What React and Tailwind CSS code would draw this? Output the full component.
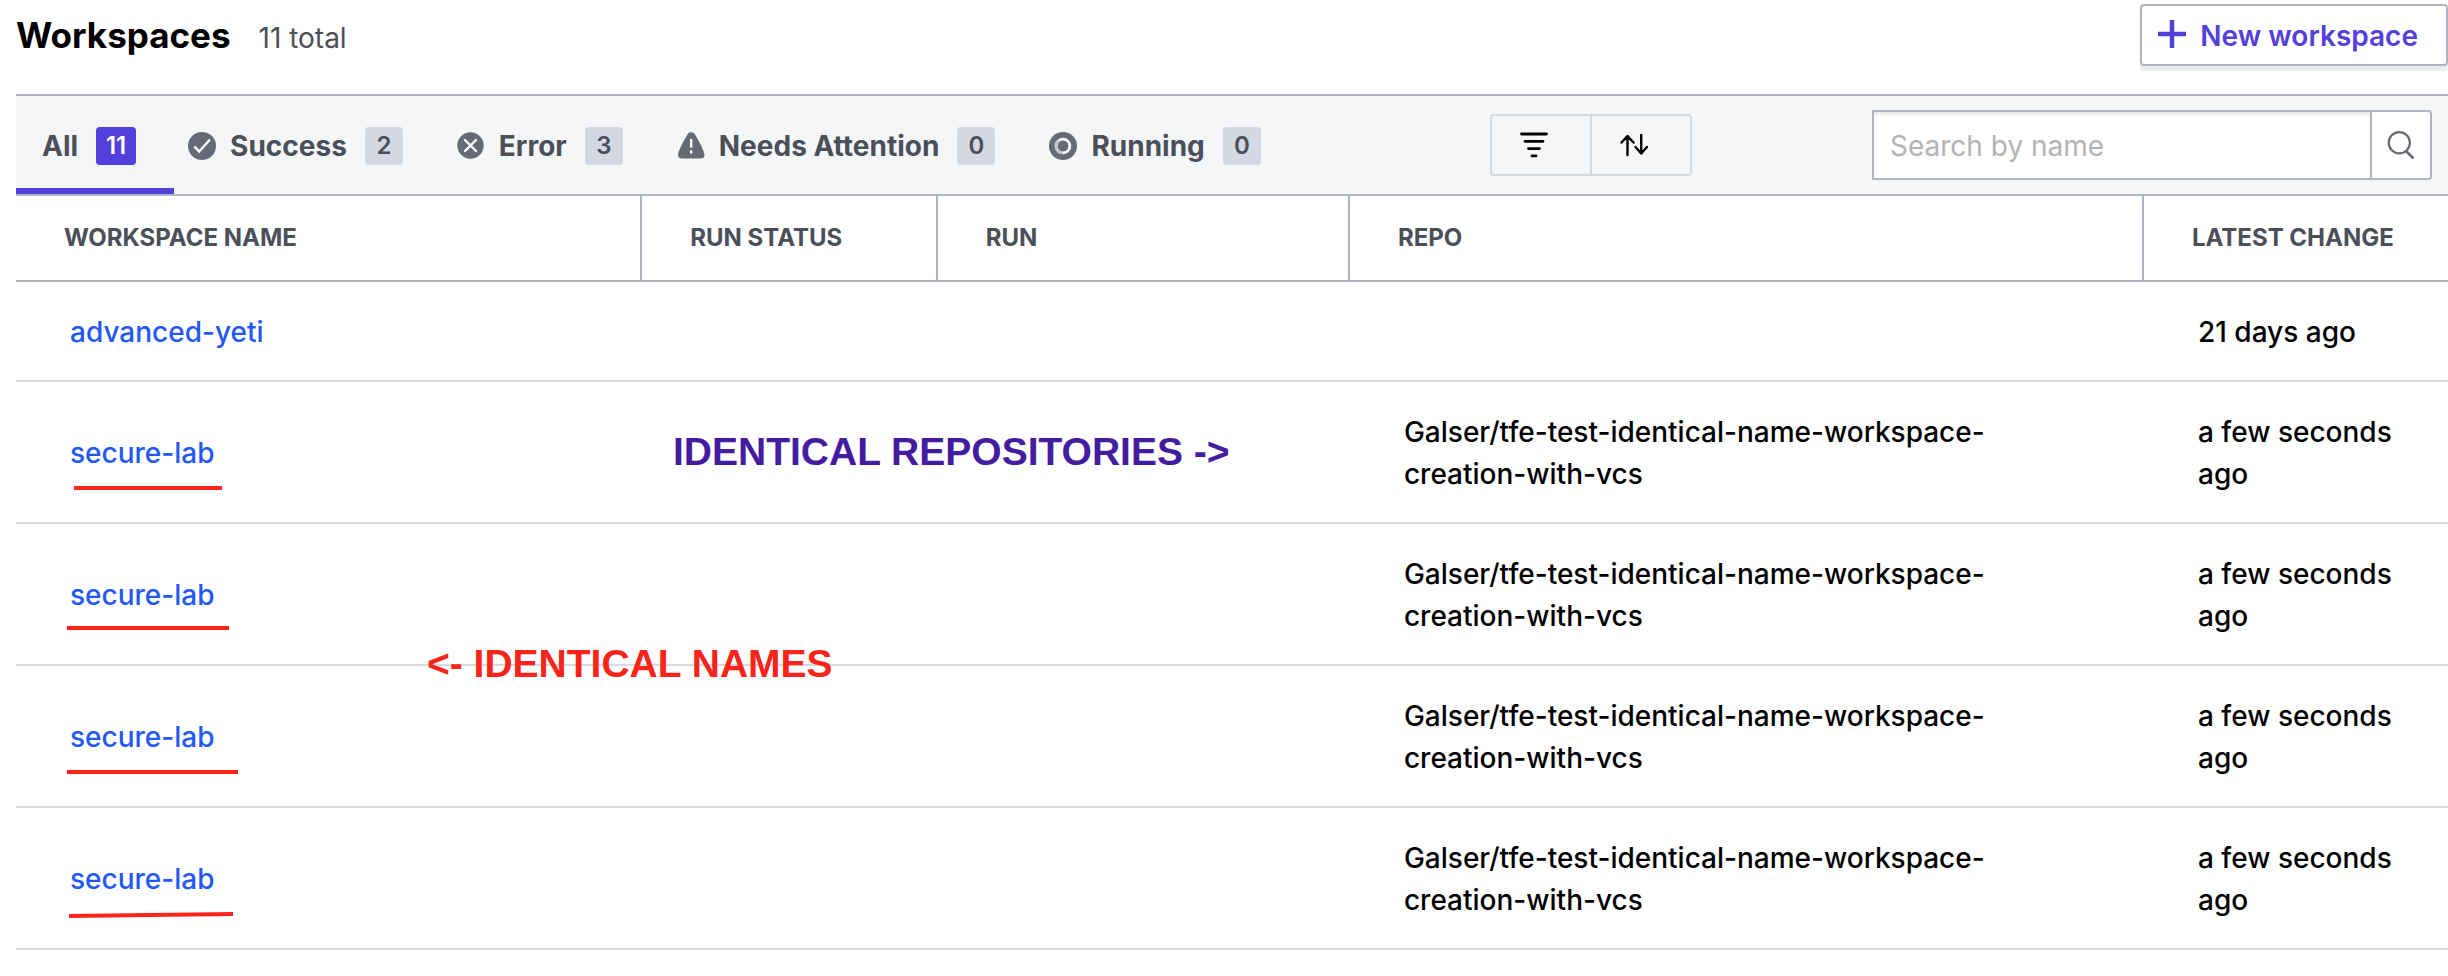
const tabs = [
  { label: "Success", count: 2, Icon: CheckIcon },
  { label: "Error", count: 3, Icon: CrossIcon },
  { label: "Needs Attention", count: 0, Icon: WarningIcon },
  { label: "Running", count: 0, Icon: RunningIcon },
];

const repo = "Galser/tfe-test-identical-name-workspace-creation-with-vcs";

const workspaces = [
  { id: 1, name: "advanced-yeti", repo: "", changed: "21 days ago" },
  { id: 2, name: "secure-lab", repo, changed: "a few seconds ago" },
  { id: 3, name: "secure-lab", repo, changed: "a few seconds ago" },
  { id: 4, name: "secure-lab", repo, changed: "a few seconds ago" },
  { id: 5, name: "secure-lab", repo, changed: "a few seconds ago" },
];

function CheckIcon() {
  return (
    <svg className="size-7" viewBox="0 0 28 28" fill="none" aria-hidden="true">
      <circle cx="14" cy="14" r="14" fill="#656a76" />
      <path d="M7 15.2l4.2 4.3L21.3 8.3" stroke="#fff" strokeWidth="2.4" strokeLinecap="round" />
    </svg>
  );
}

function CrossIcon() {
  return (
    <svg className="size-7" viewBox="0 0 28 28" fill="none" aria-hidden="true">
      <circle cx="13.5" cy="13.5" r="13.2" fill="#656a76" />
      <path d="M8 8l11 11M19 8L8 19" stroke="#fff" strokeWidth="2.4" strokeLinecap="round" />
    </svg>
  );
}

function WarningIcon() {
  return (
    <svg className="size-7" viewBox="-1 0 28 28" fill="none" aria-hidden="true">
      <path
        d="M9.500 2.400C11-.6 15.500-.6 17 2.400C20.500 8 23.500 13.500 25.600 19.500C27.500 24.500 26 26.500 22.500 26.500H4C.5 26.500-1 24.500.8 19.500C3 13.500 6 8 9.500 2.400Z"
        fill="#656a76"
      />
      <path d="M13.200 7v8.500M13.200 18.200v3.300" stroke="#fff" strokeWidth="2.400" />
    </svg>
  );
}

function RunningIcon() {
  return (
    <svg className="size-7" viewBox="0 0 28 28" fill="none" aria-hidden="true">
      <circle cx="14" cy="14" r="14" fill="#656a76" />
      <circle cx="14" cy="14" r="6.900" stroke="#fff" strokeWidth="2.800" />
      <path d="M14 20.900A6.900 6.900 0 0 1 10.500 8" stroke="#c3c5ca" strokeWidth="2.800" />
    </svg>
  );
}

function Badge({ active, children }) {
  return (
    <span
      className={
        active
          ? "flex h-[38px] min-w-10 items-center justify-center rounded-sm bg-[#5340da] px-1 text-2xl font-semibold text-white"
          : "flex h-[38px] min-w-[38px] items-center justify-center rounded-sm bg-[#d4d8e3] px-1 text-2xl font-semibold text-[#4b4f59]"
      }
    >
      {children}
    </span>
  );
}

function HeaderCell({ className, children }) {
  return (
    <th
      scope="col"
      className={`border-b-2 border-[#b0b5c4] py-[26px] pl-12 text-left text-2xl leading-8 font-bold whitespace-nowrap text-[#4b4f59] not-last:border-r-2 ${className}`}
    >
      {children}
    </th>
  );
}

export default function App() {
  return (
    <main className="relative bg-white pb-[26px] pl-4 font-['Inter','Liberation_Sans',sans-serif] text-[28px] leading-[42px] text-black">
      <header className="flex items-start justify-between pt-1 pb-7">
        <div className="flex items-baseline gap-7 pt-[10px]">
          <h1 className="text-[35px] font-bold">Workspaces</h1>
          <p className="text-[#4b4f59]">11 total</p>
        </div>
        <button
          type="button"
          className="flex h-[62px] items-center gap-[14px] rounded border-2 border-[#b0b5c4] bg-white pt-[2px] pr-7 pl-4 font-semibold text-[#5340da] shadow-[0_5px_2px_#e9ebed]"
        >
          <svg className="mb-1 size-7" viewBox="0 0 28 28" fill="none" aria-hidden="true">
            <path d="M14 0v28M0 14h28" stroke="#5340da" strokeWidth="4.500" />
          </svg>
          New workspace
        </button>
      </header>

      <div className="flex items-center border-y-2 border-[#b0b5c4] bg-[#f5f6f8] pr-4">
        <nav aria-label="Filter by status" className="flex h-[98px] shrink-0 font-bold text-[#4b4f59]">
          <button type="button" aria-current="true" className="flex items-center border-b-6 border-[#5340da] pt-2 pr-[38px] pl-[26px]">
            <span className="pr-[18px]">All</span>
            <Badge active>11</Badge>
          </button>
          {tabs.map(({ label, count, Icon }) => (
            <button key={label} type="button" className="flex items-center pt-[2px] pr-10 pl-[14px]">
              <Icon />
              <span className="pr-[18px] pl-[14px]">{label}</span>
              <Badge>{count}</Badge>
            </button>
          ))}
        </nav>

        <div className="ml-auto flex shrink-0 items-center gap-[180px]">
          <div className="flex h-[62px] divide-x-2 divide-[#d6dbe2] rounded border-2 border-[#d6dbe2]">
            <button type="button" aria-label="Filter" className="flex w-[100px] items-center justify-center pr-[14px]">
              <svg className="size-7" viewBox="0 0 28 28" fill="none" aria-hidden="true">
                <path d="M1.500 3h25M5 10.300h18M8.500 17.600h11M12 24.900h4" stroke="#000" strokeWidth="2.800" strokeLinecap="round" />
              </svg>
            </button>
            <button type="button" aria-label="Sort" className="flex w-[98px] items-center justify-center pr-[14px]">
              <svg className="size-7" viewBox="0 0 28 28" fill="none" aria-hidden="true">
                <path d="M7.500 24V5.500M1.500 11.500l6-6.500 6 6.500M21.200 4v18M15.500 16l5.700 6.500 5.800-6.500" stroke="#000" strokeWidth="2.400" strokeLinecap="round" strokeLinejoin="round" />
              </svg>
            </button>
          </div>
          <form role="search" className="flex h-[70px] w-[560px]">
            <input
              type="text"
              aria-label="Search by name"
              placeholder="Search by name"
              className="min-w-0 flex-1 border-2 border-[#b0b5c4] bg-white px-4 pt-[2px] shadow-[inset_0_3px_3px_#ececee] outline-none placeholder:text-[#b3b3b3]"
            />
            <button type="button" aria-label="Search" className="flex w-15 items-center justify-center rounded-r border-2 border-l-0 border-[#b0b5c4] bg-white">
              <svg className="size-7" viewBox="0 0 28 28" fill="none" aria-hidden="true">
                <circle cx="12.300" cy="11.800" r="10.600" stroke="#656a76" strokeWidth="2.200" />
                <path d="M19 20l7.500 7.500" stroke="#656a76" strokeWidth="2.600" />
              </svg>
            </button>
          </form>
        </div>
      </div>

      <table className="w-full table-fixed border-separate border-spacing-0 font-medium">
        <thead>
          <tr>
            <HeaderCell className="w-[25.750%]">WORKSPACE NAME</HeaderCell>
            <HeaderCell className="w-[12.150%]">RUN STATUS</HeaderCell>
            <HeaderCell className="w-[16.950%]">RUN</HeaderCell>
            <HeaderCell className="w-[32.650%]">REPO</HeaderCell>
            <HeaderCell className="w-[12.500%]">LATEST CHANGE</HeaderCell>
          </tr>
        </thead>
        <tbody>
          {workspaces.map((w) => (
            <tr key={w.id} className="*:border-b-2 *:border-[#d6dbe2] *:pt-[29px] *:pb-[27px] *:pl-[54px]">
              <td>
                <a href="#workspace" className="text-[#2458f5]">{w.name}</a>
              </td>
              <td></td>
              <td></td>
              <td className="pr-[54px]">{w.repo}</td>
              <td className="pr-10">{w.changed}</td>
            </tr>
          ))}
        </tbody>
      </table>

      <div className="pointer-events-none absolute inset-0 font-['Liberation_Sans',sans-serif] text-[39px] font-bold whitespace-nowrap">
        <svg className="absolute top-[480px] left-16 h-[442px] w-[180px]" viewBox="0 0 180 442" fill="none" aria-hidden="true">
          <path d="M10 8h148M3 148h162M3 292h171M5 436l164-2" stroke="#fb241b" strokeWidth="4" />
        </svg>
        <span className="absolute top-[431px] left-[673px] text-[#441ca0]">IDENTICAL REPOSITORIES -&gt;</span>
        <span className="absolute top-[643px] left-[427px] text-[#fb241b]">&lt;- IDENTICAL NAMES</span>
      </div>
    </main>
  );
}
